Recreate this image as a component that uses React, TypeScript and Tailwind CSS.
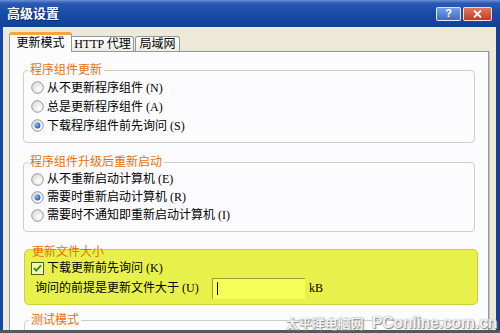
const font = "font-['Liberation_Serif','Noto_Sans_CJK_SC',serif]";

function Radio({ checked }: { checked?: boolean }) {
  return (
    <svg width="13" height="13" viewBox="0 0 13 13" className="shrink-0">
      <defs>
        <radialGradient id="rfill" cx="0.65" cy="0.65" r="0.7">
          <stop offset="0" stopColor="#ffffff" />
          <stop offset="1" stopColor="#dcdbd2" />
        </radialGradient>
        <radialGradient id="rdot" cx="0.35" cy="0.35" r="0.7">
          <stop offset="0" stopColor="#8fb6f2" />
          <stop offset="1" stopColor="#1f56c0" />
        </radialGradient>
      </defs>
      <circle cx="6.5" cy="6.5" r="5.8" fill="url(#rfill)" stroke="#8f9aa3" strokeWidth="1" />
      {checked && <circle cx="6.5" cy="6.5" r="2.9" fill="url(#rdot)" />}
    </svg>
  );
}

function Check() {
  return (
    <svg width="13" height="13" viewBox="0 0 13 13" className="shrink-0">
      <rect x="0.5" y="0.5" width="12" height="12" fill="#f4f8a8" stroke="#4f5e2c" />
      <path d="M3 6.2 L5.2 8.6 L10 3.4" fill="none" stroke="#2d8a18" strokeWidth="1.8" />
    </svg>
  );
}

function Row({ checked, label, mnemonic, h = 'h-[18px]' }: { checked?: boolean; label: string; mnemonic: string; h?: string }) {
  return (
    <div className={`flex items-center gap-[3px] pl-[7px] ${h}`}>
      <Radio checked={checked} />
      <span className="text-[12px] leading-[14px] text-black whitespace-nowrap">
        {label} ({mnemonic})
      </span>
    </div>
  );
}

export default function App() {
  return (
    <div className={`relative w-[500px] h-[333px] overflow-hidden flex flex-col bg-[#153f98] ${font}`}>
      {/* title bar */}
      <div className="h-[27px] shrink-0 flex items-center pl-[7px] pr-[8px] bg-[linear-gradient(180deg,#6a90d8_0%,#2a5ab6_12%,#1c4ca8_45%,#123f97_100%)]">
        <span className="text-white font-bold text-[13px] leading-[16px] [text-shadow:1px_1px_0_#0b2a6e]">
          高级设置
        </span>
        <div className="ml-auto flex gap-[2px]">
          <div className="w-[25px] h-[14px] rounded-[2px] border border-white/80 bg-[linear-gradient(180deg,#7aa0e4,#3d6bc8)] flex items-center justify-center text-white font-bold text-[11px] leading-none font-['Liberation_Sans',sans-serif]">
            ?
          </div>
          <div className="w-[29px] h-[14px] rounded-[2px] border border-white/80 bg-[linear-gradient(180deg,#e2775d,#c23b22)] flex items-center justify-center">
            <svg width="9" height="8" viewBox="0 0 9 8">
              <path d="M1 0.5 L8 7.5 M8 0.5 L1 7.5" stroke="#fff" strokeWidth="1.8" />
            </svg>
          </div>
        </div>
      </div>

      <div className="flex-1 flex min-h-0">
        <div className="w-[3px] shrink-0 bg-[#1846a3]" />
        <div className="flex-1 min-h-0 overflow-hidden bg-[#ece9d8] pl-[6px] pt-[5px] flex flex-col">
          {/* tabs */}
          <div className="relative z-10 h-[19px] flex items-end shrink-0">
            <div className="w-[63px] h-[20px] -mb-[1px] bg-[#fcfcfe] border border-b-0 border-[#919b9c] border-t-[3px] border-t-[#f5a63a] rounded-t-[3px] flex items-start justify-center pt-[1px]">
              <span className="text-[12px] leading-[14px] text-black">更新模式</span>
            </div>
            <div className="w-[62px] h-[15px] bg-[linear-gradient(180deg,#ffffff,#ecebe5)] border border-b-0 border-l-0 border-[#919b9c] rounded-tr-[3px] flex items-center justify-center">
              <span className="text-[12px] leading-[14px] text-black whitespace-nowrap">HTTP 代理</span>
            </div>
            <div className="w-[45px] ml-[1px] h-[15px] bg-[linear-gradient(180deg,#ffffff,#ecebe5)] border border-b-0 border-[#919b9c] rounded-t-[3px] flex items-center justify-center">
              <span className="text-[12px] leading-[14px] text-black">局域网</span>
            </div>
          </div>

          {/* panel */}
          <div className="w-[480px] flex-1 bg-[#fcfcfe] border border-[#919b9c] shadow-[1px_0_0_#c9c6b6] px-[13px] pt-[10px] flex flex-col">
            <fieldset className="border border-[#d0d0bf] rounded-[4px] pb-[7px]">
              <legend className="ml-[4px] px-[2px] text-[12px] leading-[16px] text-[#e8700c]">程序组件更新</legend>
              <Row label="从不更新程序组件" mnemonic="N" h="h-[19px]" />
              <Row label="总是更新程序组件" mnemonic="A" h="h-[19px]" />
              <Row checked label="下载程序组件前先询问" mnemonic="S" h="h-[19px]" />
            </fieldset>

            <fieldset className="mt-[11px] border border-[#d0d0bf] rounded-[4px] pb-[7px]">
              <legend className="ml-[4px] px-[2px] text-[12px] leading-[16px] text-[#e8700c]">程序组件升级后重新启动</legend>
              <Row label="从不重新启动计算机" mnemonic="E" />
              <Row checked label="需要时重新启动计算机" mnemonic="R" />
              <Row label="需要时不通知即重新启动计算机" mnemonic="I" />
            </fieldset>

            <div className="mt-[17px] ml-[1px] w-[454px] shrink-0 border border-[#c8d03c] rounded-[5px] bg-[#e8f14b] pb-[5px]">
              <div className="-mt-[5px] ml-[7px] text-[12px] leading-[14px] text-[#e8700c]">更新文件大小</div>
              <div className="h-[18px] flex items-center gap-[3px] pl-[6px]">
                <Check />
                <span className="text-[12px] leading-[14px] text-black whitespace-nowrap">下载更新前先询问 (K)</span>
              </div>
              <div className="h-[22px] flex items-center pl-[10px]">
                <span className="w-[177px] text-[12px] leading-[14px] text-black whitespace-nowrap">
                  询问的前提是更新文件大于 (U)
                </span>
                <div className="w-[93px] h-[21px] bg-[#f6ff58] border-t border-l border-[#9aa030] flex items-center pl-[4px]">
                  <div className="w-[1px] h-[13px] bg-black" />
                </div>
                <span className="ml-[4px] text-[12px] leading-[14px] text-black">kB</span>
              </div>
            </div>

            <fieldset className="mt-[7px] ml-[1px] border border-[#d0d0bf] rounded-[4px] h-[40px] shrink-0">
              <legend className="ml-[4px] px-[2px] text-[12px] leading-[16px] text-[#e8700c]">测试模式</legend>
            </fieldset>
          </div>
        </div>
        <div className="w-[4px] shrink-0 bg-[#153f98]" />
      </div>
      <div className="h-[3px] shrink-0 bg-[#55575c]" />

      {/* watermark */}
      <div className="absolute right-[3px] bottom-[2px] flex items-baseline gap-[8px] text-white/90 [text-shadow:0_0_1px_#7a7a7a,1px_1px_1px_#8a8a8a] whitespace-nowrap">
        <span className="text-[13px] leading-[16px] font-bold font-['Noto_Sans_CJK_SC',sans-serif]">太平洋电脑网</span>
        <span className="text-[16px] leading-[16px] font-bold font-['Liberation_Sans',sans-serif] tracking-[-0.3px]">PConline.com.cn</span>
      </div>
    </div>
  );
}
